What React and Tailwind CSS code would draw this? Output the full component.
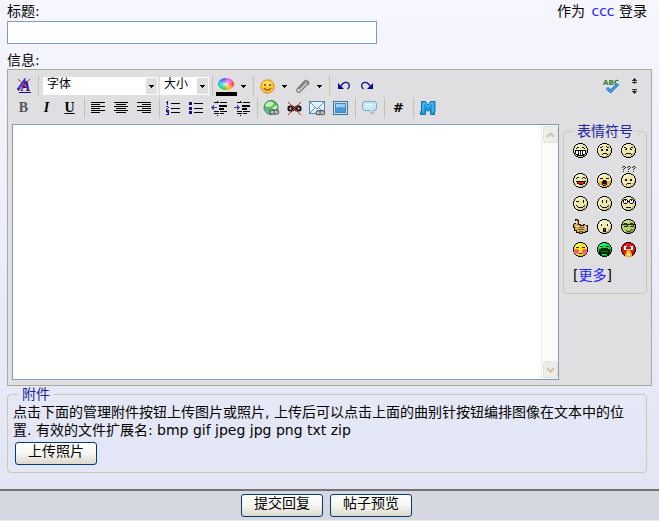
import React from "react";

const INK = "#000";

function Svg({ w = 16, h = 16, crisp = false, children }) {
  return (
    <svg
      width={w}
      height={h}
      viewBox={`0 0 ${w} ${h}`}
      fill="none"
      shapeRendering={crisp ? "crispEdges" : "auto"}
      aria-hidden="true"
      className="block shrink-0"
    >
      {children}
    </svg>
  );
}

function Tool({ label, children }) {
  return (
    <button
      type="button"
      aria-label={label}
      title={label}
      className="flex h-[22px] w-[23px] shrink-0 items-center justify-center"
    >
      {children}
    </button>
  );
}

function MenuArrow({ label }) {
  return (
    <button
      type="button"
      aria-label={label}
      className="flex h-[22px] w-3 shrink-0 items-center justify-center"
    >
      <Svg w={6} h={3} crisp>
        <path d="M0 0h5v1h-1v1h-1v1h-1v-1h-1v-1h-1z" fill={INK} />
      </Svg>
    </button>
  );
}

function Separator() {
  return (
    <div className="flex w-[6px] shrink-0 justify-center">
      <div className="h-5 w-px bg-[#c2c2ae]" />
    </div>
  );
}

function Picker({ label, className, text }) {
  return (
    <div className={`relative ml-0.5 h-[18px] shrink-0 bg-white ${className}`}>
      <select
        aria-label={label}
        className="block h-[18px] w-full appearance-none bg-transparent pl-1 pb-1 text-[12px] leading-[14px] text-black outline-none"
      >
        <option>{text}</option>
      </select>
      <span className="pointer-events-none absolute top-px right-px flex h-4 w-[11px] items-center justify-center bg-[#dfdfdf]">
        <Svg w={5} h={3} crisp>
          <path d="M0 0h5v1h-1v1h-1v1h-1v-1h-1v-1h-1z" fill={INK} />
        </Svg>
      </span>
    </div>
  );
}

function Lines({ rows }) {
  return (
    <Svg w={15} h={12} crisp>
      {rows.map(([x, w], i) => (
        <rect key={i} x={x} y={i * 2} width={w} height="1" fill={INK} />
      ))}
    </Svg>
  );
}

function IndentLines({ right }) {
  return (
    <Svg w={17} h={15} crisp>
      <path
        d="M3 1h5v1h-5zM9 1h7v1h-7zM8 4h8v2h-8zM8 7h5v2h-5zM3 10h5v1h-5zM9 10h7v1h-7zM3 12h5v1h-5zM9 12h4v1h-4zM6 0h1v1h-1zM6 14h1v1h-1z"
        fill={INK}
      />
      {right ? (
        <path d="M0 6h3v-2h1v1h1v1h1v1h-1v1h-1v1h-1v-2h-3z" fill="#4a46a8" />
      ) : (
        <path d="M6 6h-3v-2h-1v1h-1v1h-1v1h1v1h1v1h1v-2h3z" fill="#4a46a8" />
      )}
    </Svg>
  );
}

function Chain({ x, y }) {
  return (
    <g transform={`translate(${x} ${y})`}>
      <rect x=".8" y=".8" width="4.6" height="3.8" rx="1.6" stroke="#5a6468" strokeWidth="1.4" fill="#dfe5e8" />
      <rect x="4.4" y=".8" width="4.6" height="3.8" rx="1.6" stroke="#5a6468" strokeWidth="1.4" fill="#dfe5e8" />
      <path d="M3 2.7h4" stroke="#8d979b" strokeWidth="1.2" />
    </g>
  );
}

function Undo({ flip }) {
  return (
    <Svg w={14} h={10}>
      <g transform={flip ? "translate(14 0) scale(-1 1)" : undefined}>
        <path d="M4 5C5.500 1.500 9 .500 11 2c2 1.500 1.800 4-.5 6" stroke="#0a0a8c" strokeWidth="1.3" />
        <path d="M1 2v6h6z" fill="#0a0a8c" />
      </g>
    </Svg>
  );
}

const RIM =
  "M5 0h5v1h-5zM3 1h2v1h-2zM10 1h2v1h-2zM2 2h1v1h-1zM12 2h1v1h-1zM1 3h1v2h-1zM13 3h1v2h-1zM0 5h1v5h-1zM14 5h1v5h-1zM1 10h1v2h-1zM13 10h1v2h-1zM2 12h1v1h-1zM12 12h1v1h-1zM3 13h2v1h-2zM10 13h2v1h-2zM5 14h5v1h-5z";
const FILL =
  "M5 1h5v1h2v1h1v2h1v5h-1v2h-1v1h-2v1h-5v-1h-2v-1h-1v-2h-1v-5h1v-2h1v-1h2z";

function Head({ skin = "#f0e8a4", light = "#fffbe0", shade = "#c9bf6c" }) {
  return (
    <>
      <path d={FILL} fill={skin} />
      <path d="M5 2h3v1h-2v1h-2v2h-2v-1h1v-2h2z" fill={light} />
      <path d="M13 7h1v3h-1v2h-1v1h-2v1h-5v-1h4v-1h2v-2h2z" fill={shade} />
      <path d={RIM} fill={INK} />
    </>
  );
}

function Face({ children, ...tones }) {
  return (
    <Svg w={15} h={15} crisp>
      <Head {...tones} />
      {children}
    </Svg>
  );
}

const MARK = "h1v-1h2v1h1v1h-1v1h-1v1h-1v-1h1v-1h1v-1h-2v1h-1z";

const faces = [
  ["大笑", <Face><path d="M3 5h1v-1h2v1h-2v1h-1zM9 4h2v1h1v1h-1v-1h-2z" fill="#111" /><path d="M2 7h11v4h-1v1h-1v1h-7v-1h-1v-1h-1z" fill="#111" /><path d="M3 8h2v3h-2zM6 8h1v4h-1zM8 8h1v4h-1zM10 8h2v3h-2z" fill="#fff" /></Face>],
  ["难过", <Face><path d="M3 4h2v-1h1v1h-1v1h-2zM9 3h1v1h2v1h-2v-1h-1zM4 6h2v2h-2zM9 6h2v2h-2zM5 11h1v-1h4v1h1v1h-1v-1h-4v1h-1z" fill="#111" /></Face>],
  ["生气", <Face><path d="M3 4h2v1h1v1h-1v-1h-2zM10 4h2v1h-2v1h-1v-1h1zM4 6h2v1h-2zM9 6h2v1h-2zM4 11h1v-1h5v1h1v1h-1v-1h-5v1h-1z" fill="#111" /></Face>],
  ["开心", <Face><path d="M3 5h1v-1h2v1h-2v1h-1zM9 5h1v-1h2v1h1v1h-1v-1h-2v1h-1zM3 8h10v1h-1v2h-2v1h-4v-1h-2v-2h-1z" fill="#111" /><path d="M5 9h6v1h-1v1h-4v-1h-1z" fill="#e1122a" /></Face>],
  ["大哭", <Face><path d="M2 8h3v4h-2v-1h-1zM10 8h3v3h-1v1h-2z" fill="#ffae18" /><path d="M3 5h3v1h-3zM9 5h3v1h-3zM6 7h3v1h1v4h-1v1h-3v-1h-1v-4h1z" fill="#111" /><path d="M6 11h3v1h-3z" fill="#fa6410" /></Face>],
  ["疑问", (
    <Svg w={15} h={22} crisp>
      <path d={`M1 1${MARK}M6 1${MARK}M11 1${MARK}M2 5h1v1h-1zM7 5h1v1h-1zM12 5h1v1h-1z`} fill="#222" />
      <g transform="translate(0 7)">
        <Head />
        <path d="M4 6h2v2h-2zM9 6h2v2h-2zM5 11h1v-1h4v1h-4v1h-1z" fill="#111" />
      </g>
    </Svg>
  )],
  ["眨眼", <Face><path d="M3 5h3v1h-3zM10 4h1v3h-1zM3 9h1v1h1v1h5v-1h1v-1h1v1h-1v1h-1v1h-5v-1h-1v-1h-1z" fill="#111" /></Face>],
  ["微笑", <Face><path d="M5 4h1v3h-1zM9 4h1v3h-1zM3 9h1v1h1v1h5v-1h1v-1h1v1h-1v1h-1v1h-5v-1h-1v-1h-1z" fill="#111" /></Face>],
  ["翻眼", <Face><path d="M3 3h3v1h1v1h1v-1h1v-1h3v1h1v3h-1v1h-3v-1h-1v-1h-1v1h-1v1h-3v-1h-1v-3h1z" fill="#111" /><path d="M3 4h1v1h1v-1h1v3h-3zM9 4h1v1h1v-1h1v3h-3z" fill="#fff" /><path d="M5 11h5v1h-5z" fill="#111" /></Face>],
  ["赞", (
    <Svg w={15} h={15} crisp>
      <path d="M2 0h3v1h1v4h2v1h2v-1h2v1h3v7h-2v1h-3v1h-4v-1h-3v-2h-2v-3h-1v-4h1v-1h2v-2h-1z" fill="#1c1408" />
      <path d="M3 1h1v1h1v4h2v1h4v-1h2v1h1v5h-2v1h-3v1h-2v-1h-3v-2h-2v-3h-1v-3h2v-3h-1z" fill="#d0a85c" />
      <path d="M3 2h1v3h-1zM3 7h3v1h-3zM12 7h1v3h-1z" fill="#f2dca0" />
      <path d="M6 8h5v1h-5zM5 10h6v1h-6zM6 12h4v1h-4z" fill="#84602a" />
    </Svg>
  )],
  ["惊讶", <Face><path d="M3 4h3v3h-3zM9 4h3v3h-3z" fill="#fff" /><path d="M4 5h1v2h-1zM10 5h1v2h-1zM6 9h3v4h-3z" fill="#111" /><path d="M7 10h1v1h-1z" fill="#777" /></Face>],
  ["酷", <Face skin="#b4cc6c" light="#d8e69c" shade="#80983a"><path d="M1 5h2v-1h3v1h3v-1h3v1h2v1h-1v2h-4v-2h-2v2h-4v-2h-2z" fill="#26300c" /><path d="M3 6h3v1h-3zM9 6h3v1h-3z" fill="#a8c060" /><path d="M5 11h1v1h3v-1h1v-1h1v1h-1v1h-1v1h-3v-1h-1z" fill="#344010" /></Face>],
  ["害羞", <Face skin="#ffed10" light="#fff880" shade="#e0bc00"><path d="M2 7h3v1h1v3h-1v1h-2v-1h-2v-3h1zM10 7h3v1h1v3h-2v1h-2v-1h-1v-3h1z" fill="#ff5878" /><path d="M3 5h3v1h-3zM9 5h3v1h-3zM6 11h3v1h-3z" fill="#222" /></Face>],
  ["恐怖", <Face skin="#18dc4c" light="#4cff78" shade="#08a030"><path d="M3 4h3v1h-3zM9 4h3v1h-3zM4 6h7v1h2v5h-1v1h-2v-1h-5v1h-2v-1h-1v-5h2z" fill="#062c10" /><path d="M4 9h7v1h-7z" fill="#0c7428" /></Face>],
  ["愤怒", <Face skin="#e81010" light="#ff2020" shade="#b00808"><path d="M3 4h3v4h-3zM9 4h3v4h-3z" fill="#fff" /><path d="M5 5h1v2h-1zM9 5h1v2h-1z" fill="#111" /><path d="M6 7h3v2h1v2h1v4h-7v-3h1v-3h1z" fill="#f4a818" /><path d="M7 8h1v3h1v3h-3v-3h1z" fill="#ffe060" /></Face>],
];

function XpButton({ children, className = "" }) {
  return (
    <button
      type="button"
      className={`h-[23px] w-[82px] rounded-[3px] border border-[#003c74] bg-linear-to-b from-white via-[#f5f5f0] to-[#dcd8cc] pb-1 text-[14px] leading-[17px] text-black ${className}`}
    >
      {children}
    </button>
  );
}

function ScrollButton({ down }) {
  return (
    <button
      type="button"
      tabIndex={-1}
      aria-label={down ? "向下滚动" : "向上滚动"}
      className="flex h-[17px] w-[15px] items-center justify-center rounded-[2px] border border-[#e3e2d6] bg-[#efeee6]"
    >
      <Svg w={9} h={6}>
        <path d={down ? "M1 1l3.500 3.500l3.500-3.500" : "M1 5l3.500-3.500l3.500 3.500"} stroke="#c6c4b8" strokeWidth="2" />
      </Svg>
    </button>
  );
}

function Toolbar() {
  return (
    <div role="toolbar" aria-label="编辑工具">
      <div className="flex h-[22px] items-center">
        <Tool label="清除格式">
          <Svg w={16} h={16}>
            <path d="M1 11h3M2.500 10.500l6-8.500v8M4.500 7.500h4" stroke="#2038e8" strokeWidth="2" />
            <text x="5" y="13" fontFamily="Liberation Serif, serif" fontStyle="italic" fontWeight="700" fontSize="14" fill="#0a0a90">A</text>
            <path d="M3 14.500h12" stroke="#0a0a90" />
            <path d="M2 1l12 12M14 1l-12 12" stroke="#e02020" />
          </Svg>
        </Tool>
        <Separator />
        <Picker label="字体" text="字体" className="w-[115px]" />
        <Picker label="大小" text="大小" className="w-[49px]" />
        <Separator />
        <Tool label="文字颜色">
          <Svg w={21} h={19}>
            <ellipse cx="10" cy="7" rx="8" ry="6" fill="#d8d8ff" />
            <path d="M10 7L10 1A8 6 0 0 1 17 4z" fill="#f060e8" />
            <path d="M10 7L17 4A8 6 0 0 1 17 10z" fill="#ff4848" />
            <path d="M10 7L17 10A8 6 0 0 1 10 13z" fill="#ffae28" />
            <path d="M10 7L10 13A8 6 0 0 1 3 10z" fill="#38d850" />
            <path d="M10 7L3 10A8 6 0 0 1 3 4z" fill="#20c8e8" />
            <path d="M10 7L3 4A8 6 0 0 1 10 1z" fill="#5070f8" />
            <ellipse cx="10" cy="7" rx="6" ry="4" fill="#fff" opacity=".25" />
            <ellipse cx="10" cy="7" rx="3" ry="2" fill="#fff" opacity=".5" />
            <path d="M0 15h21v4h-21z" fill={INK} />
          </Svg>
        </Tool>
        <MenuArrow label="选择颜色" />
        <Separator />
        <Tool label="表情符号">
          <Svg w={15} h={15}>
            <circle cx="7.500" cy="7.500" r="6.700" fill="#ffc830" stroke="#e08a14" />
            <ellipse cx="7" cy="5" rx="4.500" ry="3" fill="#ffe47c" opacity=".7" />
            <circle cx="5" cy="6" r="1" fill="#6a4300" />
            <circle cx="10" cy="6" r="1" fill="#6a4300" />
            <path d="M4 9c1.500 2.800 5.500 2.800 7 0" stroke="#7c4d00" strokeWidth="1.200" />
          </Svg>
        </Tool>
        <MenuArrow label="选择表情" />
        <Tool label="附件">
          <Svg w={15} h={15}>
            <path d="M4 10l6-6.500c1.500-1.500 3.500.200 2 2l-6.500 7c-2 2-5-.300-3-2.800l6.500-7.200c2.500-2.600 6.300.500 4 3.500" stroke="#808080" strokeWidth="1.300" />
            <path d="M4.500 11l6-6.500" stroke="#b8b8b8" />
          </Svg>
        </Tool>
        <MenuArrow label="选择附件" />
        <Separator />
        <Tool label="撤销"><Undo /></Tool>
        <Tool label="重做"><Undo flip /></Tool>
        <div className="ml-auto flex items-center">
          <Tool label="拼写检查">
            <Svg w={17} h={15}>
              <text x="0" y="6" fontFamily="DejaVu Sans, sans-serif" fontWeight="700" fontSize="7" fill="#2e7a30">ABC</text>
              <path d="M4 9l3.500 3.500l7.500-7.500" stroke="#1868c8" strokeWidth="3" />
              <path d="M4 9l3.500 3.500l7.500-7.500" stroke="#40a8f8" strokeWidth="1.300" />
            </Svg>
          </Tool>
          <div className="mr-1 ml-1 flex w-4 flex-col items-center gap-[5px]">
            <button type="button" aria-label="缩小编辑框" className="block">
              <Svg w={6} h={6} crisp><path d="M2 0h1v1h1v1h1v1h-2v1h2v1h-2v1h-1v-1h-2v-1h2v-1h-2v-1h1v-1h1z" fill="#333" /></Svg>
            </button>
            <button type="button" aria-label="放大编辑框" className="block">
              <Svg w={6} h={6} crisp><path d="M0 0h5v1h-2v1h2v1h-1v1h-1v1h-1v-1h-1v-1h-1v-1h2v-1h-2z" fill="#333" /></Svg>
            </button>
          </div>
        </div>
      </div>

      <div className="flex h-[22px] items-center">
        <Tool label="粗体"><b className="font-['Liberation_Serif',serif] text-[14px] leading-4 text-[#555]">B</b></Tool>
        <Tool label="斜体"><b className="font-['Liberation_Serif',serif] text-[14px] leading-4 italic">I</b></Tool>
        <Tool label="下划线"><b className="font-['Liberation_Serif',serif] text-[14px] leading-4 underline">U</b></Tool>
        <Separator />
        <Tool label="左对齐"><Lines rows={[[0, 14], [0, 9], [0, 14], [0, 9], [0, 14], [0, 9]]} /></Tool>
        <Tool label="居中"><Lines rows={[[0, 14], [2, 10], [0, 14], [2, 10], [0, 14], [2, 10]]} /></Tool>
        <Tool label="右对齐"><Lines rows={[[0, 14], [5, 9], [0, 14], [5, 9], [0, 14], [5, 9]]} /></Tool>
        <Separator />
        <Tool label="编号列表">
          <Svg w={15} h={14} crisp>
            <path d="M5 2h9v1h-9zM5 7h9v1h-9zM5 11h9v1h-9z" fill={INK} />
            <path d="M1 0h1v4h-1zM0 1h1v1h-1zM0 5h2v1h1v1h-1v1h-1v1h2v1h-3v-2h1v-1h1v-1h-2zM0 10h3v4h-3v-1h2v-1h-1v-1h-1z" fill="#10108c" />
          </Svg>
        </Tool>
        <Tool label="项目列表">
          <Svg w={15} h={14} crisp>
            <path d="M5 2h9v1h-9zM5 7h9v1h-9zM5 11h9v1h-9z" fill={INK} />
            <path d="M0 1h3v3h-3zM0 6h3v3h-3zM0 10h3v3h-3z" fill="#10108c" />
          </Svg>
        </Tool>
        <Tool label="减少缩进"><IndentLines /></Tool>
        <Tool label="增加缩进"><IndentLines right /></Tool>
        <Separator />
        <Tool label="插入链接">
          <Svg w={17} h={16}>
            <circle cx="8" cy="7.500" r="7" fill="#58b858" stroke="#2c8c44" />
            <path d="M3 3.500c3-3 7-2 8 0l-2.500 3l-4 .5l-2.500-1zM9 8l4-3l1.500 2l-2 3z" fill="#c8ecc0" />
            <path d="M1.500 8c2 1 3 3 5 5.500c-3 0-5-2.500-5-5.500z" fill="#78a8e0" />
            <Chain x={6.500} y={9.500} />
          </Svg>
        </Tool>
        <Tool label="移除链接">
          <Svg w={15} h={15}>
            <rect x="1.500" y="5.500" width="5" height="4" rx="1.500" stroke="#111" strokeWidth="2" />
            <rect x="8.500" y="5.500" width="5" height="4" rx="1.500" stroke="#111" strokeWidth="2" />
            <path d="M4 7.500h7" stroke="#111" strokeWidth="1.500" />
            <path d="M1 1l13 13M14 1l-13 13" stroke="#e81818" />
          </Svg>
        </Tool>
        <Tool label="插入邮件">
          <Svg w={17} h={15}>
            <rect x=".5" y=".5" width="15" height="12" fill="#e8f4fc" stroke="#4c88bc" />
            <path d="M1 1l7 7l7-7M1 12l5-5M15 12l-5-5" stroke="#4c90c8" />
            <Chain x={6.500} y={9} />
          </Svg>
        </Tool>
        <Tool label="插入图片">
          <Svg w={15} h={14}>
            <rect x=".5" y=".5" width="14" height="13" fill="#c8e0f4" stroke="#3c74a8" />
            <rect x="2.500" y="2.500" width="10" height="9" fill="#98d0f0" stroke="#4888b8" />
            <path d="M3 7c3-2 6 0 9-1v5h-9z" fill="#4898d8" />
          </Svg>
        </Tool>
        <Separator />
        <Tool label="引用">
          <Svg w={15} h={14}>
            <path d="M3 .5h9q2.500 0 2.500 2.500v4q0 2.500-2.500 2.500h-1v3.500l-4-3.500h-4q-2.500 0-2.500-2.500v-4q0-2.500 2.500-2.500z" fill="#c4e6f6" stroke="#7cacc8" />
            <path d="M3 3.500h8M3 5.500h6" stroke="#f0faff" />
          </Svg>
        </Tool>
        <Separator />
        <Tool label="代码"><b className="font-['DejaVu_Sans',sans-serif] text-[13px] leading-4">#</b></Tool>
        <Separator />
        <Tool label="媒体">
          <Svg w={16} h={14}>
            <path d="M1 .5h4.500l2.500 4l2.500-4h4.500v10h-.5v3h-4v-5.500l-2.500 2.500l-2.500-2.500v5.500h-5v-3h1v-10z" fill="#1c9ce0" stroke="#1470ac" />
            <path d="M2 2h3l3 4l3-4h3M3 3v8M13 3v8" stroke="#58c8f4" />
          </Svg>
        </Tool>
      </div>
    </div>
  );
}

export default function App() {
  return (
    <form
      onSubmit={(e) => e.preventDefault()}
      className="bg-[#d5d7e1] font-['DejaVu_Sans','Noto_Sans_CJK_SC',sans-serif] text-[14px] leading-[18px] text-black"
    >
      <main className="border-b-2 border-[#77726f] bg-linear-to-b from-[#f5f6ff] to-[#e2e5f4] px-[7px] pt-0.5 pb-4">
        <div className="flex justify-between pr-[5px]">
          <label htmlFor="title">标题:</label>
          <p>
            作为 <a href="#user" className="ml-0.5 text-[#2222ff]">ccc</a> 登录
          </p>
        </div>
        <input
          id="title"
          type="text"
          className="mt-px block h-[23px] w-[370px] max-w-full border border-[#7f9db9] bg-white px-1 outline-none"
        />
        <label htmlFor="message" className="mt-[7px] block">信息:</label>

        <section className="border border-[#a9a999] bg-[#dfdfe1] px-1 py-[5px]">
          <Toolbar />
          <div className="mt-[5px] flex items-start gap-1">
            <div className="flex h-64 min-w-0 flex-1 border border-[#7f9db9] bg-white">
              <textarea id="message" className="block min-w-0 flex-1 resize-none overflow-hidden bg-white p-1 outline-none" />
              <div className="flex w-[17px] flex-col items-center justify-between border-l border-[#eeede5] bg-[#fbfbf8] py-px">
                <ScrollButton />
                <ScrollButton down />
              </div>
            </div>
            <fieldset className="w-[84px] shrink-0 rounded-[4px] border border-[#c9c9b4] px-1 pb-[9px]">
              <legend className="ml-[5px] px-1 leading-[14px] text-[#22229c]">表情符号</legend>
              <div className="grid grid-cols-[24px_24px_24px] grid-rows-[20px_30px_23px_23px_23px] items-end justify-items-center">
                {faces.map(([name, icon]) => (
                  <button key={name} type="button" aria-label={name} title={name} className="block">
                    {icon}
                  </button>
                ))}
              </div>
              <p className="mt-[9px] pl-[5px]">
                [<a href="#more" className="text-[#2222ff]">更多</a>]
              </p>
            </fieldset>
          </div>
        </section>

        <fieldset className="mr-[5px] rounded-[4px] border border-[#c9c9b4] px-[5px] pb-[7px]">
          <legend className="ml-[5px] px-1 leading-4 text-[#22229c]">附件</legend>
          <p className="pt-px">
            点击下面的管理附件按钮上传图片或照片, 上传后可以点击上面的曲别针按钮编排图像在文本中的位置. 有效的文件扩展名: bmp gif jpeg jpg png txt zip
          </p>
          <XpButton className="mt-[3px] ml-0.5 block">上传照片</XpButton>
        </fieldset>
      </main>

      <footer className="flex justify-center gap-[7px] border-b border-[#eeeee4] py-[3px] pr-1.5">
        <XpButton>提交回复</XpButton>
        <XpButton>帖子预览</XpButton>
      </footer>
    </form>
  );
}
